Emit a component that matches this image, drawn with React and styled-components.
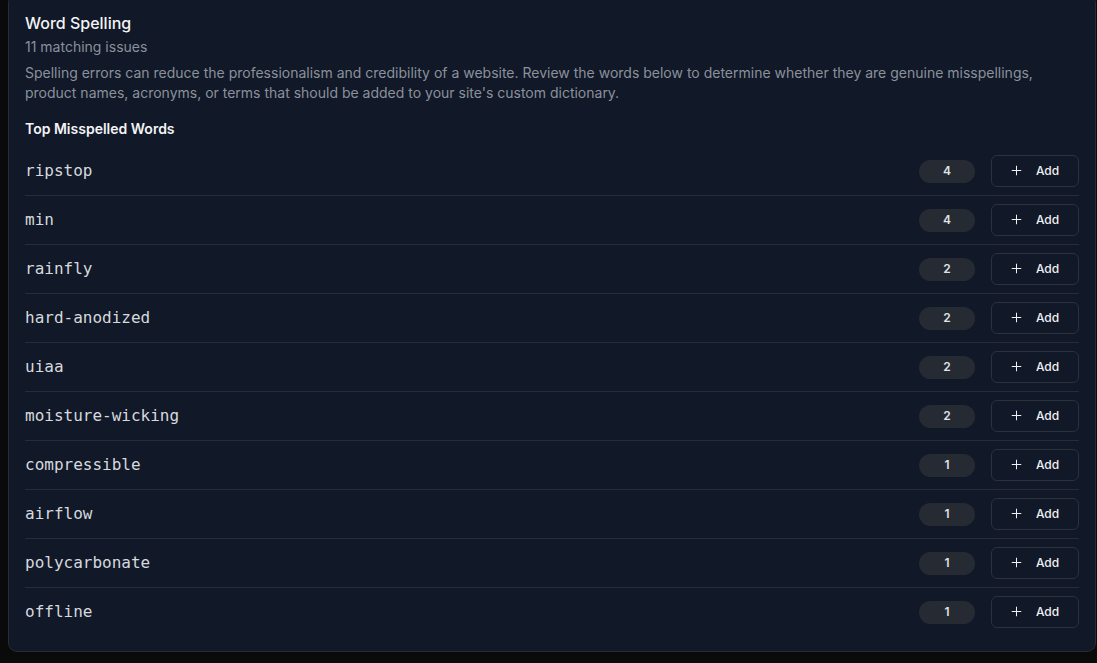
import React from "react";
import styled, { createGlobalStyle } from "styled-components";
import { Plus } from "lucide-react";

const GlobalStyle = createGlobalStyle`
  html, body {
    margin: 0;
    padding: 0;
    background: #0a0a0a;
  }
  body {
    font-family: Inter, "Noto Sans", sans-serif;
    -webkit-font-smoothing: antialiased;
  }
`;

const Page = styled.div`
  padding: 0 1px 10px 8px;
`;

const Card = styled.section`
  margin-top: -6px;
  background: #111827;
  border: 1px solid #262c38;
  border-radius: 9px;
  padding: 16px 16px 15px 16px;
`;

const Title = styled.h2`
  margin: 0;
  font-size: 16px;
  line-height: 24px;
  font-weight: 500;
  color: #f3f4f6;
`;

const Subtitle = styled.div`
  margin-top: 2px;
  font-size: 14px;
  line-height: 20px;
  color: #8b919c;
`;

const Desc = styled.p`
  margin: 6px 0 0;
  font-size: 14px;
  line-height: 20px;
  color: #8b919c;
`;

const SectionTitle = styled.h3`
  margin: 16px 0 8px;
  font-size: 14px;
  line-height: 20px;
  font-weight: 600;
  color: #f3f4f6;
`;

const List = styled.ul`
  margin: 0;
  padding: 0;
  list-style: none;
`;

const Row = styled.li`
  display: flex;
  align-items: center;
  height: 48px;
  border-bottom: ${(p) => (p.$last ? "none" : "1px solid #272c37")};
`;

const Word = styled.span`
  flex: 1;
  font-family: "DejaVu Sans Mono", "Liberation Mono", monospace;
  font-size: 16px;
  line-height: 20px;
  padding-bottom: 1px;
  color: #d6d9de;
`;

const Count = styled.span`
  width: 56px;
  height: 23px;
  padding-bottom: 1px;
  box-sizing: border-box;
  border-radius: 999px;
  background: #262a33;
  color: #dfe2e6;
  font-size: 12px;
  font-weight: 600;
  display: flex;
  align-items: center;
  justify-content: center;
  margin-right: 16px;
`;

const AddButton = styled.button`
  width: 88px;
  height: 32px;
  display: flex;
  align-items: center;
  justify-content: center;
  gap: 12px;
  padding: 0 2px 1px 0;
  background: transparent;
  border: 1px solid #2b313d;
  border-radius: 6px;
  color: #eef0f3;
  font-family: Inter, sans-serif;
  font-size: 12px;
  font-weight: 500;
  cursor: pointer;
`;

const words = [
  ["ripstop", 4],
  ["min", 4],
  ["rainfly", 2],
  ["hard-anodized", 2],
  ["uiaa", 2],
  ["moisture-wicking", 2],
  ["compressible", 1],
  ["airflow", 1],
  ["polycarbonate", 1],
  ["offline", 1],
];

const App = () => {
  return (
    <Page>
      <GlobalStyle />
      <Card>
        <Title>Word Spelling</Title>
        <Subtitle>11 matching issues</Subtitle>
        <Desc>
          Spelling errors can reduce the professionalism and credibility of a
          website. Review the words below to determine whether they are genuine
          misspellings, product names, acronyms, or terms that should be added
          to your site's custom dictionary.
        </Desc>
        <SectionTitle>Top Misspelled Words</SectionTitle>
        <List>
          {words.map(([word, count], i) => (
            <Row key={word} $last={i === words.length - 1}>
              <Word>{word}</Word>
              <Count>{count}</Count>
              <AddButton>
                <Plus size={15} strokeWidth={1.6} />
                Add
              </AddButton>
            </Row>
          ))}
        </List>
      </Card>
    </Page>
  );
};

export default App;
